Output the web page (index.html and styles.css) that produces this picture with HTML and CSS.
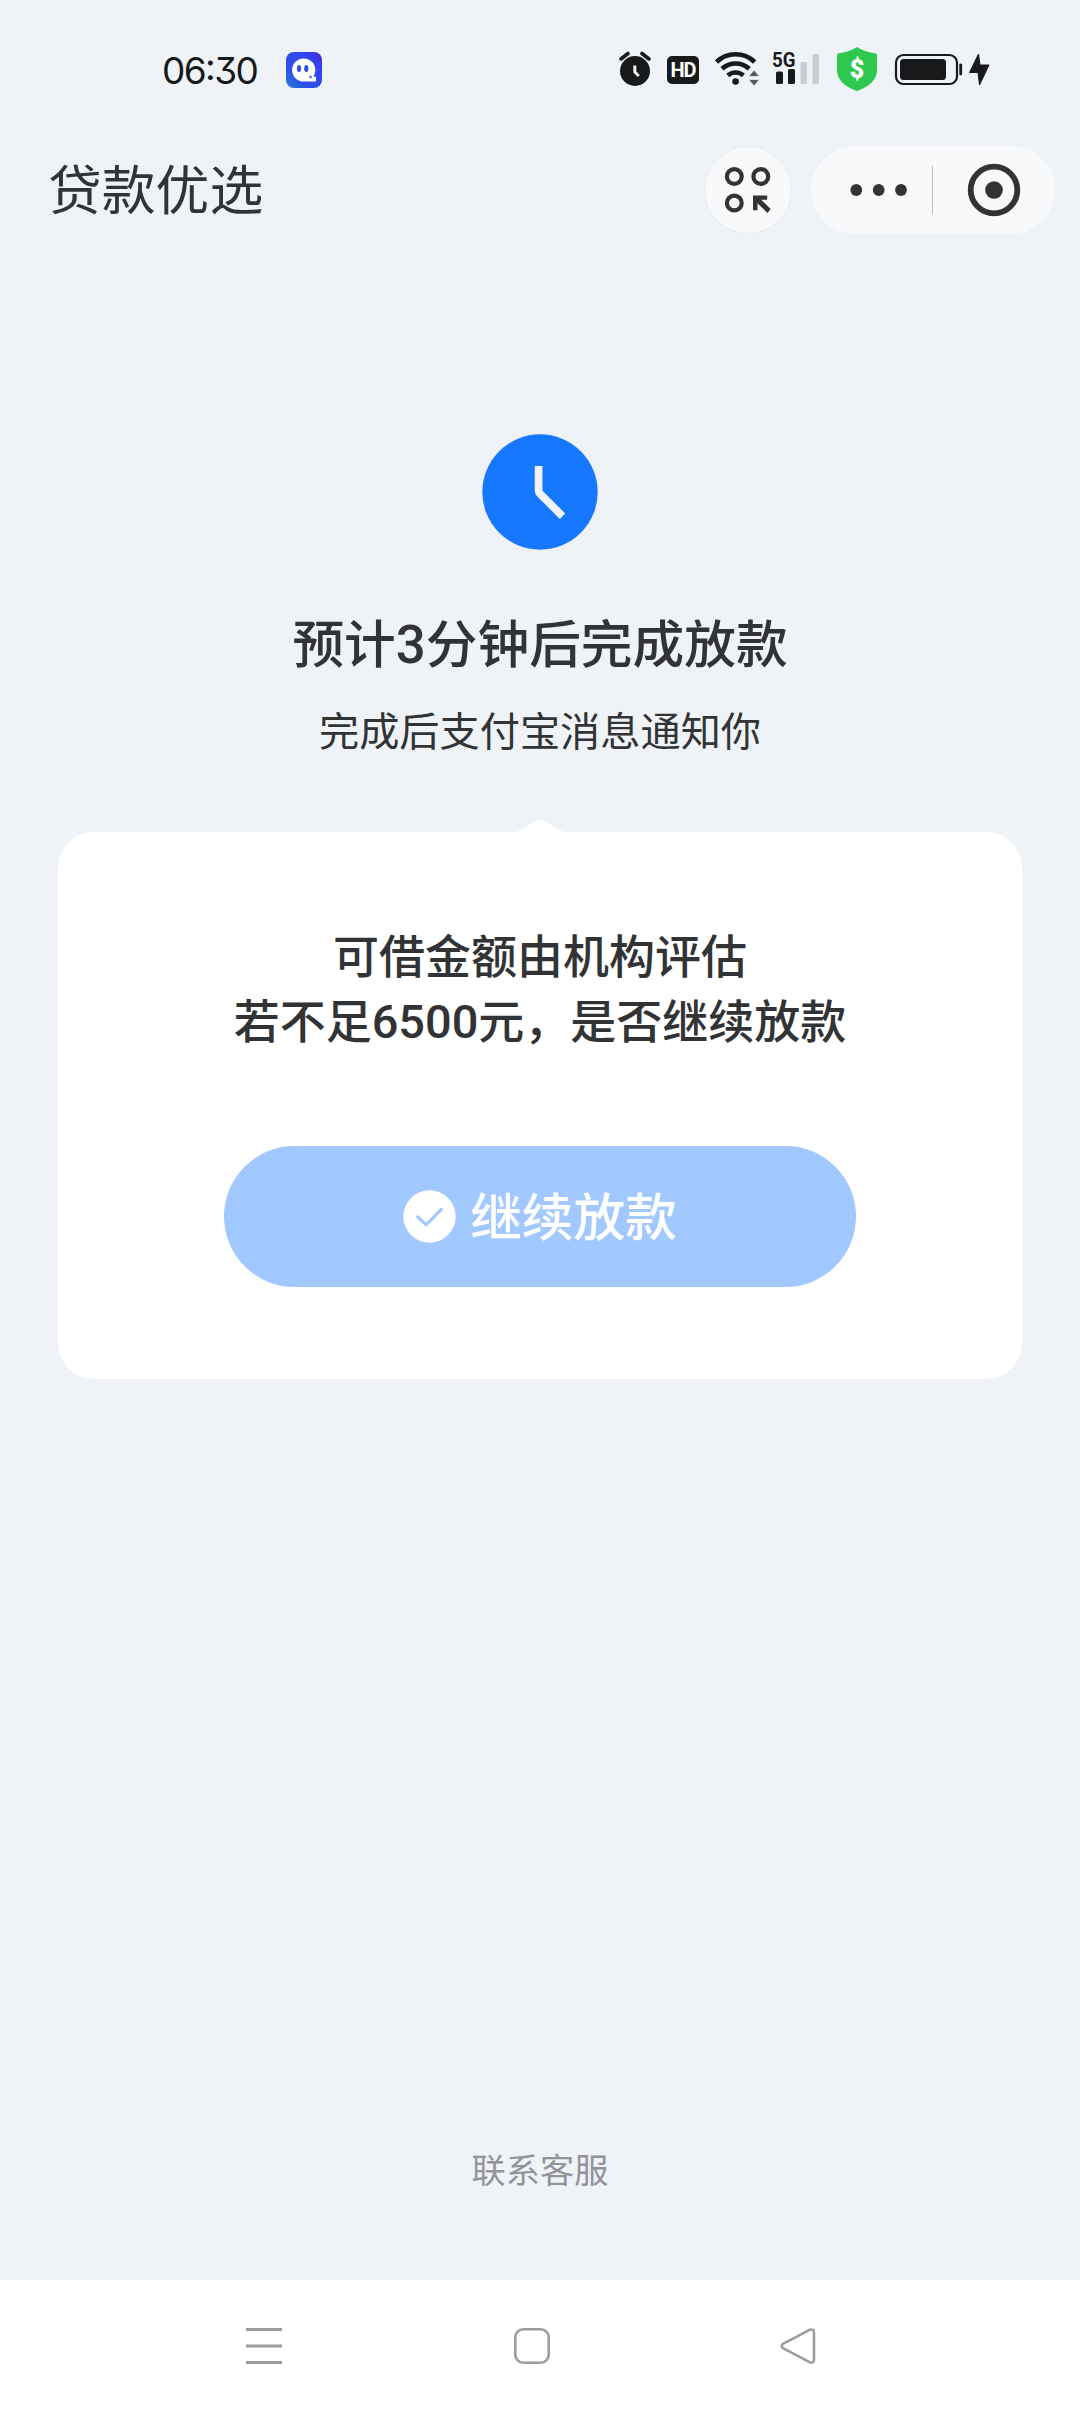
FILE: index.html
```html
<!DOCTYPE html>
<html lang="zh-CN">
<head>
<meta charset="utf-8">
<title>贷款优选</title>
<link rel="stylesheet" href="styles.css">
</head>
<body>
<div class="screen">
  <div class="status">
    <span class="time">06:30</span>
    <svg class="app" viewBox="286 52 36 36" width="36" height="36">
      <defs><linearGradient id="app" x1="0" y1="1" x2="1" y2="0"><stop offset="0" stop-color="#2b7fd0"/><stop offset=".3" stop-color="#2c50ea"/><stop offset=".7" stop-color="#3048ee"/><stop offset="1" stop-color="#4a22d8"/></linearGradient></defs>
      <rect x="286" y="52" width="36" height="36" rx="8" fill="url(#app)"/>
      <circle cx="303.700" cy="70" r="11.600" fill="#fff"/>
      <path d="M309 75l7 2v4.500h-9z" fill="#fff"/>
      <ellipse cx="299" cy="68.500" rx="2.100" ry="3.600" fill="#2c50ea"/>
      <ellipse cx="306.300" cy="68.500" rx="2.100" ry="3.600" fill="#2c50ea"/>
      <path d="M308.500 75.500l3.500 1-1 2.500z" fill="#2c50ea"/>
    </svg>
    <div class="indicators">
      <svg viewBox="619 44 32 48" width="32" height="48">
        <circle cx="635" cy="71" r="15" fill="#18191b"/>
        <path d="M621 59l7-5.500M649 59l-7-5.500" stroke="#18191b" stroke-width="3.600" stroke-linecap="round"/>
        <path d="M634.800 65.500v6.500l4 4" fill="none" stroke="#eff3f8" stroke-width="3"/>
      </svg>
      <span class="hd">HD</span>
      <svg class="wifi" viewBox="714 44 46 48" width="46" height="48">
        <g fill="none" stroke="#18191b" stroke-width="4.600">
          <path d="M716.500 62a27.500 27.500 0 0 1 38.200 0"/>
          <path d="M722 68.800a20 20 0 0 1 27.200 0"/>
          <path d="M727.800 75.500a11.800 11.800 0 0 1 15.600 0"/>
        </g>
        <circle cx="735.600" cy="81.500" r="3.300" fill="#18191b"/>
        <path d="M748.500 76.500h11l-5.500-6.500zM748.500 79.500h11l-5.500 6.500z" fill="#55575b" stroke="#eff3f8" stroke-width=".8"/>
      </svg>
      <svg class="signal" viewBox="772 44 48 48" width="48" height="48">
        <text x="772" y="67" textLength="23.500" lengthAdjust="spacingAndGlyphs" class="net-text">5G</text>
        <rect x="776" y="71.500" width="7" height="12.500" rx="1.500" fill="#18191b"/>
        <rect x="788" y="69" width="7" height="15" rx="1.500" fill="#18191b"/>
        <rect x="800.500" y="62" width="6.500" height="22" rx="1" fill="#c9ccd1"/>
        <rect x="812.500" y="54" width="6.500" height="30" rx="1" fill="#c9ccd1"/>
      </svg>
      <svg class="shield" viewBox="836 44 42 48" width="42" height="48">
        <path d="M857 47c5.500 3.600 12 5.600 18 6.200 1.300.2 2 .9 2 2.200v15c0 10-9 16.500-20 20.600-11-4.100-20-10.600-20-20.600v-15c0-1.300.7-2 2-2.200 6-.6 12.500-2.600 18-6.200z" fill="#2dc84d"/>
        <text x="857" y="77.500" text-anchor="middle" class="dollar">$</text>
      </svg>
      <svg class="battery" viewBox="894 44 69 48" width="69" height="48">
        <rect x="896" y="55" width="61" height="29" rx="7.500" fill="none" stroke="#18191b" stroke-width="2.200"/>
        <rect x="900" y="59" width="46" height="21" rx="3.500" fill="#18191b"/>
        <path d="M960.700 65v9" stroke="#18191b" stroke-width="2.800" stroke-linecap="round"/>
      </svg>
      <svg class="bolt" viewBox="968 44 22 48" width="22" height="48">
        <path d="M978.500 54l-9 18.500h8.500l1.500 12.500 9.500-20h-9z" fill="#18191b" stroke="#18191b" stroke-linejoin="round"/>
      </svg>
    </div>
  </div>

  <header class="header">
    <h1 class="page-title">贷款优选</h1>
    <button class="tool" aria-label="应用">
      <svg viewBox="724 166 48 48" width="48" height="48">
        <g fill="none" stroke="#323335" stroke-width="4.200">
          <circle cx="734.300" cy="176.500" r="7.400"/><circle cx="760.800" cy="176.500" r="7.400"/><circle cx="734.300" cy="203" r="7.400"/>
        </g>
        <path d="M753 195.500h14.200v4.300h-6l9.500 9.300-3.300 3.800-9.900-9.700v7.100h-4.500z" fill="#323335"/>
      </svg>
    </button>
    <div class="capsule">
      <svg viewBox="850 182 58 16" width="58" height="16" fill="#323335"><circle cx="856.300" cy="190" r="5.900"/><circle cx="878.700" cy="190" r="5.900"/><circle cx="901" cy="190" r="5.900"/></svg>
      <span class="divider"></span>
      <svg viewBox="-27 -27 54 54" width="54" height="54"><circle r="23.300" fill="none" stroke="#323335" stroke-width="5.800"/><circle r="8.800" fill="#323335"/></svg>
    </div>
  </header>

  <main class="main">
    <svg class="clock" viewBox="0 0 116 116" width="116" height="116">
      <circle cx="58" cy="58" r="57.700" fill="#1678ff"/>
      <path d="M56.600 32v24.500q0 1.800 1.200 3L80.500 82.200" fill="none" stroke="#f0f4fa" stroke-width="7.700"/>
    </svg>
    <h2 class="headline">预计<span class="num">3</span>分钟后完成放款</h2>
    <p class="subline">完成后支付宝消息通知你</p>
    <section class="card">
      <svg class="pointer" viewBox="0 0 56 14" width="56" height="14"><path d="M0 14C6 13 9 10.500 14 7.500L23 2.300Q28-1 33 2.300L42 7.500C47 10.500 50 13 56 14z" fill="#fff"/></svg>
      <p class="question">可借金额由机构评估<br>若不足<span class="num">6500</span>元，是否继续放款</p>
      <button class="confirm">
        <svg viewBox="0 0 54 54" width="53" height="53"><circle cx="27" cy="27" r="26.700" fill="#fff"/><path d="M14 26.500l9.600 9L40 18.700" fill="none" stroke="#a1c8ff" stroke-width="3.200"/></svg>
        <span>继续放款</span>
      </button>
    </section>
    <a class="service">联系客服</a>
  </main>

  <nav class="nav">
    <svg viewBox="0 0 36 36" width="36" height="36"><path d="M0 1.500h36M0 18h36M0 34.500h36" stroke="#9c9c9c" stroke-width="2.800"/></svg>
    <svg class="home" viewBox="0 0 36 36" width="36" height="36"><rect x="1.300" y="1.300" width="33.400" height="33.400" rx="8" fill="none" stroke="#9c9c9c" stroke-width="2.600"/></svg>
    <svg viewBox="0 0 36 36" width="36" height="36"><path d="M30 1.700L3 15.800Q.4 18 3 20.200L30 34.300Q34 35.500 34 31.500V4.500Q34 .5 30 1.700z" fill="none" stroke="#9c9c9c" stroke-width="2.500" stroke-linejoin="round"/></svg>
  </nav>
</div>
</body>
</html>
```
FILE: styles.css
```css
* { box-sizing: border-box; }
body, h1, h2, p { margin: 0; }
body {
  background: #eff3f8;
  color: #323335;
  font-family: "Noto Sans CJK SC", sans-serif;
}
svg { display: block; flex: none; }
button { border: 0; padding: 0; font: inherit; color: inherit; }
.screen {
  width: 1080px;
  height: 2412px;
  display: flex;
  flex-direction: column;
}

.status {
  height: 146px;
  padding: 44px 90px 0 162px;
  display: flex;
  align-items: flex-start;
}
.time {
  width: 124px;
  padding-top: 1px;
  font: 400 37px/52px Inter, sans-serif;
  font-feature-settings: "cv09", "case";
  letter-spacing: -1.6px;
  color: #18191b;
}
.app { margin-top: 8px; }
.indicators { display: flex; margin-left: auto; }
.hd {
  width: 32px;
  height: 28px;
  margin: 12px 0 0 16px;
  border-radius: 5px;
  background: #18191b;
  color: #fff;
  font: 700 20px/28px Roboto, sans-serif;
  letter-spacing: -1px;
  text-align: center;
}
.wifi { margin-left: 15px; }
.signal { margin-left: 12px; }
.shield { margin-left: 16px; }
.battery { margin-left: 16px; }
.bolt { margin-left: 5px; }
.net-text { font: 700 21px Roboto, sans-serif; fill: #18191b; }
.dollar { font: 900 25px Roboto, sans-serif; fill: #fff; }

.header {
  height: 88px;
  padding: 0 25px 0 48px;
  display: flex;
  align-items: center;
}
.page-title {
  font-size: 53.800px;
  line-height: 80px;
  font-weight: 400;
  margin: -7px auto 0 0;
}
.tool {
  width: 88px;
  height: 88px;
  border-radius: 50%;
  background: #f8f9fb;
  border: 1px solid #e9ebef;
  display: grid;
  place-items: center;
  margin-right: 19px;
}
.capsule {
  width: 244px;
  height: 88px;
  border-radius: 44px;
  background: #f8f9fb;
  padding: 0 34px 0 39px;
  display: flex;
  align-items: center;
  justify-content: space-between;
}
.divider { width: 1px; height: 48px; background: #b9bbbf; margin-left: -11px; }

.main {
  flex: 1;
  padding: 200px 58px 0;
  display: flex;
  flex-direction: column;
  align-items: center;
}
.num { font-family: Roboto, sans-serif; font-size: 1.02em; line-height: 1; }
.headline {
  margin-top: 51px;
  font-size: 51.700px;
  line-height: 80px;
  font-weight: 500;
}
.subline {
  margin-top: 18px;
  font-size: 40.200px;
  line-height: 60px;
}
.card {
  position: relative;
  width: 964px;
  height: 547px;
  margin-top: 73px;
  padding-top: 89px;
  border-radius: 36px;
  background: #fff;
  display: flex;
  flex-direction: column;
  align-items: center;
}
.pointer { position: absolute; left: 454px; top: -13px; }
.question {
  font-size: 46px;
  line-height: 65px;
  font-weight: 500;
  text-align: center;
}
.confirm {
  width: 632px;
  height: 141px;
  margin-top: 95px;
  border-radius: 71px;
  background: #a1c8ff;
  color: #fff;
  font-size: 51.700px;
  line-height: 80px;
  font-weight: 500;
  display: flex;
  align-items: center;
  justify-content: center;
  gap: 14px;
}
.confirm span { margin-top: -5px; }
.service {
  margin: auto 0 87px;
  font-size: 34.200px;
  line-height: 50px;
  color: #929498;
}

.nav {
  height: 132px;
  padding: 0 264px 0 246px;
  background: #fff;
  display: flex;
  align-items: center;
  justify-content: space-between;
}
.home { margin-left: 2px; }
```
